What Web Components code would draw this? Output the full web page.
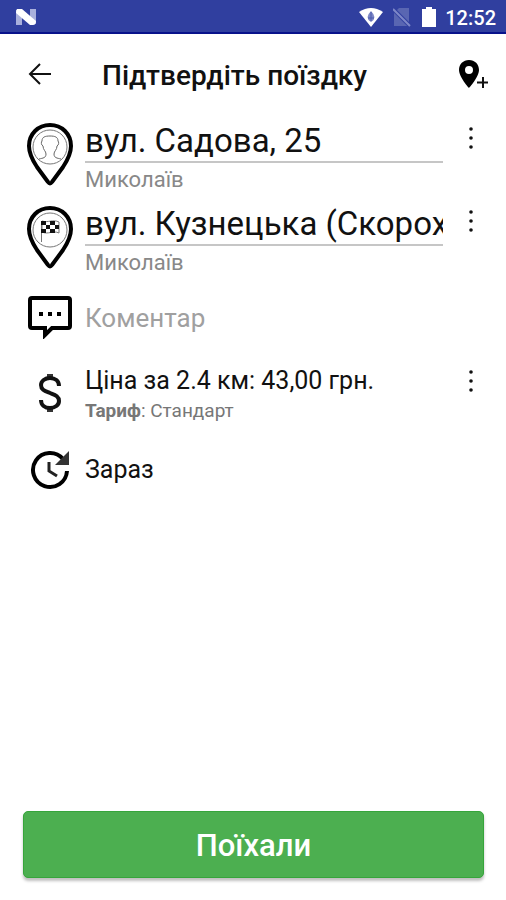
<!DOCTYPE html>
<html lang="uk">
<head>
<meta charset="utf-8">
<meta name="viewport" content="width=device-width, initial-scale=1">
<title>Підтвердіть поїздку</title>
<style>
    body {
        margin: 0;
        background: #fff;
        color: #111;
        font-family: Roboto, "Liberation Sans", sans-serif;
    }
</style>
</head>
<body>
<order-screen></order-screen>

<script>
const icons = {
    back: `<svg width="24" height="24" viewBox="0 0 24 24" fill="none" stroke="#111" stroke-width="2"><path d="M23 12H2M12 2L2 12l10 10"/></svg>`,
    addPlace: `<svg width="32" height="32" viewBox="0 0 32 32"><path fill="#000" fill-rule="evenodd" d="M11 2C5.200 2 1 6.200 1 12c0 7 10 18 10 18s10-11 10-18C21 6.200 16.800 2 11 2zm0 6a4 4 0 1 1 0 8 4 4 0 0 1 0-8z"/><path d="M25 19v11M19 24.500h11" stroke="#111" stroke-width="2"/></svg>`,
    from: `<svg width="48" height="64" viewBox="0 0 48 64" fill="none"><path d="M24 2C12 2 3 11 3 23c0 8 4 15 8 21l11 15q2 3 4 0l11-15c4-6 8-13 8-21C45 11 36 2 24 2z" stroke="#000" stroke-width="4"/><circle cx="24" cy="24" r="17" stroke="#777"/><path d="M13 36C17 35 20 35 20 31C20 28 17 27 17 23C15 22 15 19 16 18C16 14 19 13 24 13C29 13 32 14 32 18C33 19 33 22 31 23C31 27 28 28 28 31C28 35 31 35 35 36" stroke="#666"/></svg>`,
    to: `<svg width="48" height="64" viewBox="0 0 48 64" fill="none"><path d="M24 2C12 2 3 11 3 23c0 8 4 15 8 21l11 15q2 3 4 0l11-15c4-6 8-13 8-21C45 11 36 2 24 2z" stroke="#000" stroke-width="4"/><circle cx="24" cy="24" r="17" stroke="#777"/><path d="M15.500 15v21" stroke="#777"/><path d="M16 15c6 2 11-2 17 1v11c-6-3-11 2-17-1z" stroke="#777"/><path fill="#111" d="M15 15h5v4h-5zM24 15h5v4h-5zM20 19h4v4h-4zM29 19h4v4h-4zM15 23h5v4h-5zM24 23h5v4h-5z"/></svg>`,
    comment: `<svg width="44" height="44" viewBox="0 0 44 44"><path d="M4 3h36q2 0 2 2v26q0 2-2 2H24l-7 7v-7H4q-2 0-2-2V5q0-2 2-2z" fill="none" stroke="#000" stroke-width="4"/><path d="M11 17h4v4h-4zM20 17h4v4h-4zM29 17h4v4h-4z"/></svg>`,
    price: `<svg width="24" height="40" viewBox="0 0 24 40"><path d="M9 1h6v5H9zM9 33h6v6H9z" fill="#333"/><path d="M21 13c0-5-4-8-9-8s-9 3-9 7c0 5 4 6 9 8s9 3 9 8c0 4-4 7-9 7s-9-3-9-8" fill="none" stroke="#111" stroke-width="4"/></svg>`,
    time: `<svg width="40" height="40" viewBox="0 0 40 40"><path d="M33 9A17 17 0 1 0 37 21" fill="none" stroke="#000" stroke-width="4"/><path d="M39 1v14H25z" fill="#333"/><path d="M19 12v9l8 5" fill="none" stroke="#222" stroke-width="3"/></svg>`,
    more: `<svg width="8" height="26" viewBox="0 0 8 26" fill="#111"><circle cx="4" cy="4" r="1.800"/><circle cx="4" cy="13" r="1.800"/><circle cx="4" cy="22" r="1.800"/></svg>`
};

class StatusBar extends HTMLElement {
    constructor() {
        super();
        this.attachShadow({ mode: 'open' });
    }

    connectedCallback() {
        this.shadowRoot.innerHTML = `
            <style>
                :host {
                    display: flex;
                    align-items: center;
                    box-sizing: border-box;
                    height: 34px;
                    padding: 2px 10px 0 15px;
                    background: #303f9f;
                    border-bottom: 2px solid #08128b;
                    color: #fff;
                    font-size: 20px;
                    font-weight: 500;
                }
                svg { display: block; }
                .system {
                    display: flex;
                    align-items: center;
                    gap: 8px;
                    margin-left: auto;
                }
                time { line-height: 24px; padding-top: 2px; }
            </style>
            <svg width="22" height="18" viewBox="0 0 22 18">
                <path d="M1 2l6 3v12H1zM15 1h6v15l-6-3z" fill="#a9b0dc"/>
                <path d="M2 1h5l14 12q0 4-3 4h-3L1 5q0-3 1-4z" fill="#fff"/>
            </svg>
            <div class="system">
                <svg width="26" height="20" viewBox="0 0 26 20">
                    <path d="M0 5Q12-3 24 5L12 20z" fill="#fff"/>
                    <path d="M12 4q7 7 0 11-7-4 0-11z" fill="#7d87c5"/>
                    <path d="M12 5v9M9 11h6" stroke="#4d5aad"/>
                </svg>
                <svg width="20" height="20" viewBox="0 0 20 20">
                    <path d="M6 1h10v18H1V6z" fill="#5966b2"/>
                    <path d="M0 2l17 17" stroke="#303f9f" stroke-width="4"/>
                    <path d="M0 2l17 17" stroke="#7e88c8" stroke-width="2"/>
                </svg>
                <svg width="16" height="22" viewBox="0 0 16 22">
                    <path d="M1 3h4V1h6v2h4v18H1z" fill="#fff"/>
                </svg>
                <time>12:52</time>
            </div>
        `;
    }
}

class AppBar extends HTMLElement {
    constructor() {
        super();
        this.attachShadow({ mode: 'open' });
    }

    connectedCallback() {
        this.shadowRoot.innerHTML = `
            <style>
                :host {
                    display: flex;
                    align-items: center;
                    height: 80px;
                    padding: 0 8px 0 16px;
                }
                h1 {
                    flex: 1;
                    margin: 0;
                    padding: 4px 0 0 38px;
                    font-size: 28px;
                    line-height: 32px;
                    font-weight: 500;
                    white-space: nowrap;
                }
                button {
                    display: grid;
                    place-items: center;
                    width: 48px;
                    height: 48px;
                    padding: 0;
                    border: 0;
                    background: none;
                }
            </style>
            <button type="button" aria-label="Назад">${icons.back}</button>
            <h1><slot></slot></h1>
            <button type="button" aria-label="Додати адресу">${icons.addPlace}</button>
        `;
    }
}

// Рядок замовлення: іконка, вміст і необов'язкове меню
class OrderRow extends HTMLElement {
    constructor() {
        super();
        this.attachShadow({ mode: 'open' });
    }

    connectedCallback() {
        const icon = this.getAttribute('icon');
        const hasMenu = this.hasAttribute('menu');

        this.shadowRoot.innerHTML = `
            <style>
                :host {
                    display: grid;
                    grid-template-columns: 70px minmax(0, 1fr) 55px;
                    align-items: center;
                    padding: 0 8px 0 15px;
                }
                .icon {
                    display: grid;
                    place-items: center;
                    padding-top: var(--icon-top, 0);
                }
                svg { display: block; }
                button {
                    align-self: start;
                    display: grid;
                    place-items: center;
                    height: 36px;
                    padding: 0;
                    border: 0;
                    background: none;
                }
            </style>
            <div class="icon">${icons[icon]}</div>
            <slot></slot>
            ${hasMenu ? `<button type="button" aria-label="Меню">${icons.more}</button>` : ''}
        `;
    }
}

class AddressField extends HTMLElement {
    constructor() {
        super();
        this.attachShadow({ mode: 'open' });
    }

    connectedCallback() {
        const label = this.getAttribute('label');
        const value = this.getAttribute('value');

        this.shadowRoot.innerHTML = `
            <style>
                :host { display: block; }
                input {
                    display: block;
                    box-sizing: border-box;
                    width: 100%;
                    height: 43px;
                    padding: 0;
                    border: 0;
                    border-bottom: 2px solid #c6c6c6;
                    border-radius: 0;
                    background: none;
                    color: inherit;
                    font: 33px/40px Roboto, sans-serif;
                    outline: none;
                }
                .city {
                    font-size: 22px;
                    line-height: 34px;
                    color: #888;
                }
            </style>
            <input type="text" aria-label="${label}" value="${value}" readonly>
            <div class="city"><slot></slot></div>
        `;
    }
}

class CommentField extends HTMLElement {
    constructor() {
        super();
        this.attachShadow({ mode: 'open' });
    }

    connectedCallback() {
        this.shadowRoot.innerHTML = `
            <style>
                :host { display: block; }
                input {
                    display: block;
                    width: 100%;
                    padding: 2px 0 0;
                    border: 0;
                    background: none;
                    color: inherit;
                    font: 26px/32px Roboto, sans-serif;
                    outline: none;
                }
                input::placeholder { color: #a0a0a0; opacity: 1; }
            </style>
            <input type="text" aria-label="Коментар" placeholder="Коментар">
        `;
    }
}

class RideButton extends HTMLElement {
    constructor() {
        super();
        this.attachShadow({ mode: 'open' });
    }

    connectedCallback() {
        this.shadowRoot.innerHTML = `
            <style>
                :host { display: block; }
                button {
                    display: block;
                    width: 100%;
                    height: 67px;
                    padding: 2px 0 0;
                    border: 1px solid #36a53b;
                    border-radius: 5px;
                    background: #4caf50;
                    box-shadow: 0 3px 3px rgba(0, 0, 0, 0.25);
                    color: #fff;
                    font: 500 31px/40px Roboto, sans-serif;
                }
            </style>
            <button type="button"><slot></slot></button>
        `;
    }
}

class OrderScreen extends HTMLElement {
    constructor() {
        super();
        this.attachShadow({ mode: 'open' });
    }

    connectedCallback() {
        this.shadowRoot.innerHTML = `
            <style>
                :host {
                    display: flex;
                    flex-direction: column;
                    min-height: 100vh;
                }
                main { flex: 1; padding-top: 6px; }
                .address {
                    height: 83px;
                    align-items: start;
                    --icon-top: 3px;
                }
                .comment { height: 62px; }
                .price {
                    height: 65px;
                    padding-top: 15px;
                    align-items: start;
                    --icon-top: 10px;
                }
                .time { height: 72px; padding-top: 6px; }
                .title { font-size: 25px; line-height: 36px; }
                .tariff { font-size: 19px; line-height: 24px; color: #777; }
                footer { padding: 0 22px 22px 23px; }
            </style>
            <status-bar></status-bar>
            <app-bar>Підтвердіть поїздку</app-bar>
            <main>
                <order-row class="address" icon="from" menu>
                    <address-field label="Звідки" value="вул. Садова, 25">Миколаїв</address-field>
                </order-row>
                <order-row class="address" icon="to" menu>
                    <address-field label="Куди" value="вул. Кузнецька (Скороходова)">Миколаїв</address-field>
                </order-row>
                <order-row class="comment" icon="comment">
                    <comment-field></comment-field>
                </order-row>
                <order-row class="price" icon="price" menu>
                    <div>
                        <div class="title">Ціна за 2.4 км: 43,00 грн.</div>
                        <div class="tariff"><b>Тариф</b>: Стандарт</div>
                    </div>
                </order-row>
                <order-row class="time" icon="time">
                    <div class="title">Зараз</div>
                </order-row>
            </main>
            <footer>
                <ride-button>Поїхали</ride-button>
            </footer>
        `;
    }
}

customElements.define('status-bar', StatusBar);
customElements.define('app-bar', AppBar);
customElements.define('order-row', OrderRow);
customElements.define('address-field', AddressField);
customElements.define('comment-field', CommentField);
customElements.define('ride-button', RideButton);
customElements.define('order-screen', OrderScreen);
</script>
</body>
</html>
